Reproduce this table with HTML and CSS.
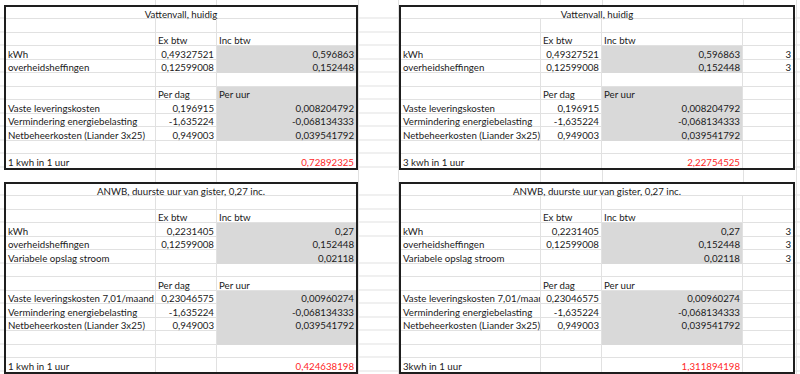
FILE: index.html
```html
<!DOCTYPE html>
<html lang="nl">
<head>
<meta charset="utf-8">
<title>Stroomkosten vergelijking</title>
<link rel="stylesheet" href="styles.css">
</head>
<body>
<div class="sheet">
  <div class="band">
    <div class="pad-l"></div>
    <section class="panel panel-l">
      <div class="c title">Vattenvall, huidig</div>
      <div class="c"></div><div class="c"></div><div class="c last"></div>
      <div class="c"></div><div class="c">Ex btw</div><div class="c last">Inc btw</div>
      <div class="c">kWh</div><div class="c num">0,49327521</div><div class="c num shade last">0,596863</div>
      <div class="c">overheidsheffingen</div><div class="c num">0,12599008</div><div class="c num shade last">0,152448</div>
      <div class="c"></div><div class="c"></div><div class="c last"></div>
      <div class="c"></div><div class="c">Per dag</div><div class="c shade last">Per uur</div>
      <div class="c">Vaste leveringskosten</div><div class="c num">0,196915</div><div class="c num shade last">0,008204792</div>
      <div class="c">Vermindering energiebelasting</div><div class="c num">-1,635224</div><div class="c num shade last">-0,068134333</div>
      <div class="c">Netbeheerkosten (Liander 3x25)</div><div class="c num">0,949003</div><div class="c num shade last">0,039541792</div>
      <div class="c"></div><div class="c"></div><div class="c last"></div>
      <div class="c end">1 kwh in 1 uur</div><div class="c end"></div><div class="c num red last end">0,72892325</div>
    </section>
    <div class="gap"></div>
    <section class="panel panel-r">
      <div class="c title">Vattenvall, huidig</div>
      <div class="c"></div><div class="c"></div><div class="c"></div><div class="c last"></div>
      <div class="c"></div><div class="c">Ex btw</div><div class="c">Inc btw</div><div class="c last"></div>
      <div class="c">kWh</div><div class="c num">0,49327521</div><div class="c num shade">0,596863</div><div class="c num last">3</div>
      <div class="c">overheidsheffingen</div><div class="c num">0,12599008</div><div class="c num shade">0,152448</div><div class="c num last">3</div>
      <div class="c"></div><div class="c"></div><div class="c"></div><div class="c last"></div>
      <div class="c"></div><div class="c">Per dag</div><div class="c shade">Per uur</div><div class="c last"></div>
      <div class="c">Vaste leveringskosten</div><div class="c num">0,196915</div><div class="c num shade">0,008204792</div><div class="c last"></div>
      <div class="c">Vermindering energiebelasting</div><div class="c num">-1,635224</div><div class="c num shade">-0,068134333</div><div class="c last"></div>
      <div class="c">Netbeheerkosten (Liander 3x25)</div><div class="c num">0,949003</div><div class="c num shade">0,039541792</div><div class="c last"></div>
      <div class="c"></div><div class="c"></div><div class="c"></div><div class="c last"></div>
      <div class="c end">3 kwh in 1 uur</div><div class="c end"></div><div class="c num red end">2,22754525</div><div class="c last end"></div>
    </section>
    <div class="pad-r"></div>
  </div>

  <div class="band">
    <div class="pad-l"></div>
    <section class="panel panel-l">
      <div class="c title">ANWB, duurste uur van gister, 0,27 inc.</div>
      <div class="c"></div><div class="c"></div><div class="c last"></div>
      <div class="c"></div><div class="c">Ex btw</div><div class="c last">Inc btw</div>
      <div class="c">kWh</div><div class="c num">0,2231405</div><div class="c num shade last">0,27</div>
      <div class="c">overheidsheffingen</div><div class="c num">0,12599008</div><div class="c num shade last">0,152448</div>
      <div class="c">Variabele opslag stroom</div><div class="c"></div><div class="c num shade last">0,02118</div>
      <div class="c"></div><div class="c"></div><div class="c last"></div>
      <div class="c"></div><div class="c">Per dag</div><div class="c last">Per uur</div>
      <div class="c">Vaste leveringskosten 7,01/maand</div><div class="c num">0,23046575</div><div class="c num shade last">0,00960274</div>
      <div class="c">Vermindering energiebelasting</div><div class="c num">-1,635224</div><div class="c num shade last">-0,068134333</div>
      <div class="c">Netbeheerkosten (Liander 3x25)</div><div class="c num">0,949003</div><div class="c num shade last">0,039541792</div>
      <div class="c"></div><div class="c"></div><div class="c shade last"></div>
      <div class="c"></div><div class="c"></div><div class="c last"></div>
      <div class="c end">1 kwh in 1 uur</div><div class="c end"></div><div class="c num red last end">0,424638198</div>
    </section>
    <div class="gap"></div>
    <section class="panel panel-r">
      <div class="c title">ANWB, duurste uur van gister, 0,27 inc.</div>
      <div class="c"></div><div class="c"></div><div class="c"></div><div class="c last"></div>
      <div class="c"></div><div class="c">Ex btw</div><div class="c">Inc btw</div><div class="c last"></div>
      <div class="c">kWh</div><div class="c num">0,2231405</div><div class="c num shade">0,27</div><div class="c num last">3</div>
      <div class="c">overheidsheffingen</div><div class="c num">0,12599008</div><div class="c num shade">0,152448</div><div class="c num last">3</div>
      <div class="c">Variabele opslag stroom</div><div class="c"></div><div class="c num shade">0,02118</div><div class="c num last">3</div>
      <div class="c"></div><div class="c"></div><div class="c"></div><div class="c last"></div>
      <div class="c"></div><div class="c">Per dag</div><div class="c">Per uur</div><div class="c last"></div>
      <div class="c">Vaste leveringskosten 7,01/maand</div><div class="c num">0,23046575</div><div class="c num shade">0,00960274</div><div class="c last"></div>
      <div class="c">Vermindering energiebelasting</div><div class="c num">-1,635224</div><div class="c num shade">-0,068134333</div><div class="c last"></div>
      <div class="c">Netbeheerkosten (Liander 3x25)</div><div class="c num">0,949003</div><div class="c num shade">0,039541792</div><div class="c last"></div>
      <div class="c"></div><div class="c"></div><div class="c shade"></div><div class="c last"></div>
      <div class="c"></div><div class="c"></div><div class="c"></div><div class="c last"></div>
      <div class="c end">3kwh in 1 uur</div><div class="c end"></div><div class="c num red end">1,311894198</div><div class="c last end"></div>
    </section>
    <div class="pad-r"></div>
  </div>
</div>
</body>
</html>
```

FILE: styles.css
```css
html, body {
  margin: 0;
  padding: 0;
  background: #ffffff;
}

.sheet {
  width: 800px;
  height: 374px;
  overflow: hidden;
  box-sizing: border-box;
  padding-top: 5px;
  display: flex;
  flex-direction: column;
  gap: 12.5px;
  font-family: Lato, "Liberation Sans", sans-serif;
  font-size: 9.7px;
  color: #1a1a1a;
  background:
    linear-gradient(#e1e1e1, #e1e1e1) 154.5px 0 / 1px 100% no-repeat,
    linear-gradient(#e1e1e1, #e1e1e1) 216px 0 / 1px 100% no-repeat,
    linear-gradient(#e1e1e1, #e1e1e1) 357.5px 0 / 1px 100% no-repeat,
    linear-gradient(#e1e1e1, #e1e1e1) 398px 0 / 1px 100% no-repeat,
    linear-gradient(#e1e1e1, #e1e1e1) 540px 0 / 1px 100% no-repeat,
    linear-gradient(#e1e1e1, #e1e1e1) 601.5px 0 / 1px 100% no-repeat,
    linear-gradient(#e1e1e1, #e1e1e1) 742.5px 0 / 1px 100% no-repeat,
    linear-gradient(#e1e1e1, #e1e1e1) 796px 0 / 1px 100% no-repeat,
    #ffffff;
}

.band {
  display: flex;
  flex: none;
  background: repeating-linear-gradient(to bottom, transparent 0 12.5px, #e1e1e1 12.5px 13.5px);
  background-position: 0 0.5px;
}

.pad-l { width: 4px; flex: none; }
.gap { width: 41px; flex: none; }
.pad-r { flex: 1; }

.panel {
  flex: none;
  box-sizing: border-box;
  border: 2px solid #1e1e1e;
  background: #ffffff;
  display: grid;
  grid-template-rows: 12px;
  grid-auto-rows: 13.5px;
}

.panel-l {
  width: 354px;
  grid-template-columns: 150px 61px 139px;
}

.panel-r {
  width: 396px;
  grid-template-columns: 140px 61px 141px 50px;
}

.c {
  box-sizing: border-box;
  min-width: 0;
  overflow-x: clip;
  overflow-y: visible;
  white-space: nowrap;
  padding: 2.5px 2px 0;
  line-height: 10px;
  border-right: 1px solid #e1e1e1;
  border-bottom: 1px solid #e1e1e1;
}

.c.last { border-right: none; }
.c.end { border-bottom: none; }

.title {
  grid-column: 1 / -1;
  text-align: center;
  border-right: none;
  padding-top: 2px;
}

.num { text-align: right; }

.shade {
  background: #d9d9d9;
  border-bottom-color: #d9d9d9;
}

.red { color: #ff1f1f; }
```
